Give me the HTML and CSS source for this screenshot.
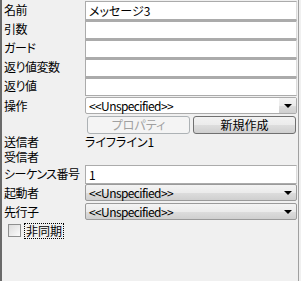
FILE: index.html
```html
<!DOCTYPE html>
<html lang="ja">
<head>
    <meta charset="UTF-8">
    <title>プロパティ</title>
    <link rel="stylesheet" href="styles.css">
</head>
<body>
    <div class="panel">
        <div class="form">
            <div class="row field">
                <label>名前</label>
                <div class="text">メッセージ3</div>
            </div>
            <div class="row field">
                <label>引数</label>
                <div class="text"></div>
            </div>
            <div class="row field">
                <label>ガード</label>
                <div class="text"></div>
            </div>
            <div class="row field">
                <label>返り値変数</label>
                <div class="text"></div>
            </div>
            <div class="row field">
                <label>返り値</label>
                <div class="text"></div>
            </div>

            <div class="row combo-row first">
                <label>操作</label>
                <div class="combo white">
                    <span class="combo-text">&lt;&lt;Unspecified&gt;&gt;</span>
                    <span class="drop"><i class="arrow"></i></span>
                </div>
            </div>

            <div class="row buttons">
                <span></span>
                <div class="btn-pair">
                    <button class="btn" disabled>プロパティ</button>
                    <button class="btn">新規作成</button>
                </div>
            </div>

            <div class="row plain">
                <label>送信者<br>受信者</label>
                <span class="value">ライフライン1</span>
            </div>

            <div class="row field">
                <label>シーケンス番号</label>
                <div class="text">1</div>
            </div>

            <div class="row combo-row">
                <label>起動者</label>
                <div class="combo">
                    <span class="combo-text">&lt;&lt;Unspecified&gt;&gt;</span>
                    <span class="drop"><i class="arrow"></i></span>
                </div>
            </div>
            <div class="row combo-row">
                <label>先行子</label>
                <div class="combo">
                    <span class="combo-text">&lt;&lt;Unspecified&gt;&gt;</span>
                    <span class="drop"><i class="arrow"></i></span>
                </div>
            </div>

            <div class="check">
                <span class="box"></span>
                <span class="check-label">非同期</span>
            </div>
        </div>
    </div>
</body>
</html>
```

FILE: styles.css
```css
body {
    margin: 0;
    padding: 0;
    background: #f0f0f0;
    font-family: "Noto Sans CJK JP", "Liberation Sans", sans-serif;
    font-size: 12px;
    font-feature-settings: "palt";
    color: #000;
}

.panel {
    width: 299px;
    height: 281px;
    border-left: 2px solid #6a6a6a;
    border-right: 1px solid #a0a0a0;
    padding-right: 1px;
    box-sizing: border-box;
}

.form {
    display: flex;
    flex-direction: column;
}

.row {
    display: grid;
    grid-template-columns: 83px 1fr;
    align-items: center;
}

.row label {
    padding-left: 2px;
    line-height: 14px;
    white-space: nowrap;
    letter-spacing: -0.5px;
}

/* stacked text boxes */
.field {
    height: 19px;
}

.field .text {
    height: 19px;
    box-sizing: border-box;
    background: #fff;
    border: 1px solid #ababab;
    border-right-color: #dcdcdc;
    margin-bottom: -1px;
    padding: 0 3px;
    line-height: 17px;
}

.field + .field .text {
    border-top-width: 2px;
    line-height: 16px;
}

/* combo boxes */
.combo-row {
    height: 19px;
}

.combo-row.first {
    margin-top: 1px;
}

.combo {
    height: 17px;
    box-sizing: border-box;
    display: flex;
    align-items: center;
    justify-content: space-between;
    border: 1px solid #9a9a9a;
    border-radius: 2px;
    background: linear-gradient(#f3f3f3, #ebebeb 50%, #dddddd 51%, #cfcfcf);
    padding-left: 3px;
    line-height: 15px;
}

.combo-text {
    letter-spacing: -0.6px;
}

.combo.white {
    background: #fff;
    border-color: #ababab;
}

.drop {
    width: 17px;
    height: 15px;
    display: flex;
    align-items: center;
    justify-content: center;
}

.combo.white .drop {
    background: linear-gradient(#f3f3f3, #ebebeb 50%, #dddddd 51%, #cfcfcf);
}

.arrow {
    width: 0;
    height: 0;
    border-left: 4px solid transparent;
    border-right: 4px solid transparent;
    border-top: 4px solid #000;
}

/* buttons */
.buttons {
    height: 18px;
    margin-top: 1px;
}

.btn-pair {
    display: grid;
    grid-template-columns: 1fr 1fr;
    gap: 3px;
    padding: 0 1px 0 2px;
}

.btn {
    height: 18px;
    font-family: inherit;
    font-size: 12px;
    font-feature-settings: "palt";
    line-height: 14px;
    padding: 0;
    color: #000;
    border: 1px solid #707070;
    border-radius: 3px;
    background: linear-gradient(#f2f2f2, #ebebeb 50%, #dddddd 51%, #cfcfcf);
}

.btn:disabled {
    color: #a0a0a0;
    border-color: #adb2b5;
    background: #f4f4f4;
}

/* read-only values */
.plain {
    height: 30px;
    align-items: start;
}

.plain label {
    line-height: 15px;
}

.value {
    line-height: 15px;
}

/* checkbox */
.check {
    display: flex;
    align-items: center;
    gap: 4px;
    margin: 2px 0 0 6px;
    height: 15px;
}

.box {
    width: 11px;
    height: 11px;
    border: 1px solid #8e8f8f;
    background: linear-gradient(135deg, #dcdcdc, #fbfbfb);
}

.check-label {
    outline: 1px dotted #000;
    line-height: 14px;
    padding: 0 1px;
}
```
